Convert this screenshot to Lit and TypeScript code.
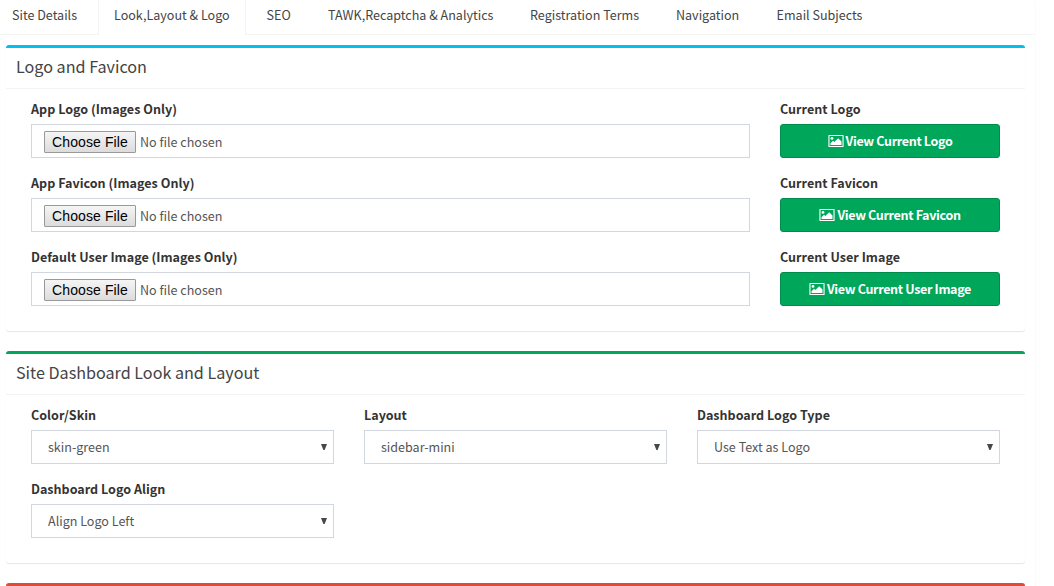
import { LitElement, html, css, svg } from "lit";
import { customElement, property } from "lit/decorators.js";

const pictureIcon = html`<svg class="icon" width="16" height="14" viewBox="0 0 16 14" aria-hidden="true">
  ${svg`<path fill-rule="evenodd" fill="#fff" d="M1 1H15Q15.6 1 15.6 1.6V12.4Q15.6 13 15 13H1Q.4 13 .4 12.4V1.6Q.4 1 1 1ZM1.5 2V12H14.5V2Z"/>
  <circle cx="4" cy="4.4" r="1.4" fill="#fff"/>
  <path fill="#fff" d="M2.5 11V9.3L5 6.8L6.3 8.1L10.2 4.2L13.5 7.5V11Z"/>`}
</svg>`;

@customElement("settings-box")
class SettingsBox extends LitElement {
  @property() heading = "";
  @property({ reflect: true }) tone = "info";

  static styles = css`
    :host {
      display: block;
      box-sizing: border-box;
      border-top: 3px solid #00c0ef;
      border-radius: 3px;
      background: #fff;
      box-shadow: 0 1px 1px rgba(0, 0, 0, 0.1);
      margin-bottom: 20px;
    }
    :host([tone="success"]) { border-top-color: #00a65a; }
    :host([tone="danger"]) { border-top-color: #dd4b39; }
    .header {
      box-sizing: border-box;
      height: 41px;
      padding: 8px 10px;
      border-bottom: 1px solid #f4f4f4;
      color: #444;
      font-size: 16.15px;
      line-height: 20px;
      white-space: nowrap;
    }
    .body { padding: 10px 25px 25px; }
  `;

  render() {
    return html`<div class="header">${this.heading}</div>
      <div class="body"><slot></slot></div>`;
  }
}

@customElement("file-row")
class FileRow extends LitElement {
  @property() label = "";
  @property() current = "";

  static styles = css`
    :host {
      display: grid;
      grid-template-columns: 719px 220px;
      column-gap: 30px;
    }
    .label {
      margin-bottom: 5px;
      color: #333;
      font-weight: 700;
      letter-spacing: 0.02px;
      white-space: nowrap;
    }
    .file {
      box-sizing: border-box;
      height: 34px;
      padding: 1px 12px 0;
      display: flex;
      align-items: center;
      gap: 4px;
      border: 1px solid #d2d6de;
      color: #555;
    }
    .choose {
      box-sizing: border-box;
      width: 92px;
      height: 22px;
      padding: 0;
      border: 1px solid #999;
      border-radius: 1px;
      background: linear-gradient(#f5f5f5, #dcdcdc);
      color: #000;
      font: 14px/20px "Liberation Sans", sans-serif;
      letter-spacing: 0.1px;
      white-space: nowrap;
    }
    .view {
      box-sizing: border-box;
      width: 100%;
      height: 34px;
      padding: 0;
      display: flex;
      align-items: center;
      justify-content: center;
      gap: 2px;
      border: 1px solid #008d4c;
      border-radius: 3px;
      background: #00a65a;
      color: #fff;
      font: inherit;
      font-weight: 700;
      letter-spacing: -0.35px;
      white-space: nowrap;
    }
    .icon { display: block; flex: none; }
  `;

  render() {
    return html`<div>
        <div class="label">${this.label}</div>
        <div class="file"><button class="choose">Choose File</button><span>No file chosen</span></div>
      </div>
      <div>
        <div class="label">Current ${this.current}</div>
        <button class="view">${pictureIcon}<span>View Current ${this.current}</span></button>
      </div>`;
  }
}

@customElement("select-field")
class SelectField extends LitElement {
  @property() label = "";
  @property() value = "";

  static styles = css`
    :host { display: block; }
    .label {
      margin-bottom: 5px;
      color: #333;
      font-weight: 700;
      white-space: nowrap;
    }
    .select {
      box-sizing: border-box;
      height: 34px;
      padding: 0 6px 0 16px;
      display: flex;
      align-items: center;
      justify-content: space-between;
      border: 1px solid #d2d6de;
      color: #555;
    }
  `;

  render() {
    return html`<div class="label">${this.label}</div>
      <div class="select">
        <span>${this.value}</span>
        <svg width="6" height="8" viewBox="0 0 6 8"><path d="M0 1H6L3.6 7H2.4Z" fill="#484848" /></svg>
      </div>`;
  }
}

@customElement("app-root")
class AppRoot extends LitElement {
  static styles = css`
    :host {
      display: block;
      height: 586px;
      overflow: hidden;
      background: #fff;
      font-family: "Noto Sans CJK SC", "Open Sans", sans-serif;
      font-size: 12.55px;
      line-height: 20px;
    }
    .panel {
      box-sizing: border-box;
      width: 1035px;
      height: 100%;
      box-shadow: 0 1px 1px rgba(0, 0, 0, 0.1);
    }
    .tabs {
      box-sizing: border-box;
      height: 35px;
      display: grid;
      grid-template-columns: 98px 152.6px 61.4px 202px 146px 100.6px 1fr;
      border-bottom: 1px solid #f4f4f4;
      color: #444;
    }
    .tab {
      box-sizing: border-box;
      height: 34px;
      padding: 5px 0 0 16px;
      white-space: nowrap;
    }
    .tab:first-child { padding-left: 12px; }
    .tab.active {
      width: 148px;
      height: 35px;
      padding-left: 15px;
      border: solid #f4f4f4;
      border-width: 0 1px;
      background: #fff;
    }
    .content { padding: 10px 10px 0 6px; }
    .rows { display: grid; row-gap: 15px; }
    .fields {
      display: grid;
      grid-template-columns: repeat(3, 303px);
      gap: 15px 30px;
    }
  `;

  private tabs = ["Site Details", "Look,Layout & Logo", "SEO", "TAWK,Recaptcha & Analytics", "Registration Terms", "Navigation", "Email Subjects"];

  render() {
    return html`<div class="panel">
      <nav class="tabs">
        ${this.tabs.map((t, i) => html`<div class="tab ${i === 1 ? "active" : ""}">${t}</div>`)}
      </nav>
      <div class="content">
        <settings-box heading="Logo and Favicon" tone="info">
          <div class="rows">
            <file-row label="App Logo (Images Only)" current="Logo"></file-row>
            <file-row label="App Favicon (Images Only)" current="Favicon"></file-row>
            <file-row label="Default User Image (Images Only)" current="User Image"></file-row>
          </div>
        </settings-box>
        <settings-box heading="Site Dashboard Look and Layout" tone="success">
          <div class="fields">
            <select-field label="Color/Skin" value="skin-green"></select-field>
            <select-field label="Layout" value="sidebar-mini"></select-field>
            <select-field label="Dashboard Logo Type" value="Use Text as Logo"></select-field>
            <select-field label="Dashboard Logo Align" value="Align Logo Left"></select-field>
          </div>
        </settings-box>
        <settings-box tone="danger"></settings-box>
      </div>
    </div>`;
  }
}
